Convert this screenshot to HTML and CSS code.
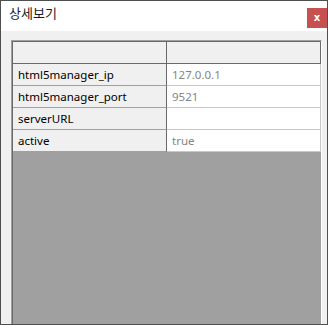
FILE: index.html
```html
<!doctype html>
<html lang="ko">
<head>
    <meta charset="UTF-8">
    <title>상세보기</title>
    <link rel="stylesheet" href="styles.css">
</head>
<body>
<div class="window">
    <div class="title_bar">
        <span class="title">상세보기</span>
        <span class="close_btn">x</span>
    </div>
    <div class="window_body">
        <div class="grid">
            <div class="grid_row head">
                <div class="cell key"></div>
                <div class="cell val"></div>
            </div>
            <div class="grid_row">
                <div class="cell key">html5manager_ip</div>
                <div class="cell val">127.0.0.1</div>
            </div>
            <div class="grid_row">
                <div class="cell key">html5manager_port</div>
                <div class="cell val">9521</div>
            </div>
            <div class="grid_row">
                <div class="cell key">serverURL</div>
                <div class="cell val"></div>
            </div>
            <div class="grid_row">
                <div class="cell key">active</div>
                <div class="cell val">true</div>
            </div>
            <div class="grid_empty"></div>
        </div>
    </div>
</div>
</body>
</html>
```

FILE: styles.css
```css
body {
    margin: 0;
    font-family: "Noto Sans", "Noto Sans CJK KR", sans-serif;
}

.window {
    box-sizing: border-box;
    width: 328px;
    height: 325px;
    border: 1px solid #4f4f4f;
    display: flex;
    flex-direction: column;
    background: #f0f0f0;
}

.title_bar {
    height: 30px;
    background: #fff;
    display: flex;
    align-items: flex-start;
    justify-content: space-between;
}

.title {
    font-family: "Noto Sans CJK KR", sans-serif;
    font-size: 13px;
    line-height: 19px;
    color: #1a1a1a;
    padding: 2px 0 0 8px;
}

.close_btn {
    width: 20px;
    height: 20px;
    margin-top: 7px;
    background: #c75050;
    color: #fff;
    font-family: "DejaVu Sans", sans-serif;
    font-weight: bold;
    font-size: 10px;
    line-height: 19px;
    text-align: center;
}

.window_body {
    flex: 1;
    padding: 9px 5px 0 10px;
    display: flex;
}

.grid {
    flex: 1;
    display: flex;
    flex-direction: column;
    border-top: 1px solid #a0a0a0;
    border-left: 1px solid #a0a0a0;
    border-right: 1px solid #fff;
    box-shadow: inset 1px 1px 0 #696969;
    padding: 1px 0 0 1px;
    background: #a0a0a0;
}

.grid_row {
    display: flex;
    height: 22px;
}

.cell {
    box-sizing: border-box;
    height: 22px;
    padding: 0 5px;
    font-size: 11.5px;
    line-height: 21px;
    white-space: nowrap;
    overflow: hidden;
}

.key {
    width: 154px;
    background: #f0f0f0;
    color: #000;
    border-right: 1px solid #696969;
    border-bottom: 1px solid #a0a0a0;
}

.val {
    flex: 1;
    background: #fff;
    color: #858585;
    border-right: 1px solid #c8c8c8;
    border-bottom: 1px solid #c8c8c8;
}

.head .cell {
    background: #f0f0f0;
    border-bottom: 1px solid #696969;
    border-right: 1px solid #696969;
}

.grid_empty {
    flex: 1;
    background: #a0a0a0;
}
```
